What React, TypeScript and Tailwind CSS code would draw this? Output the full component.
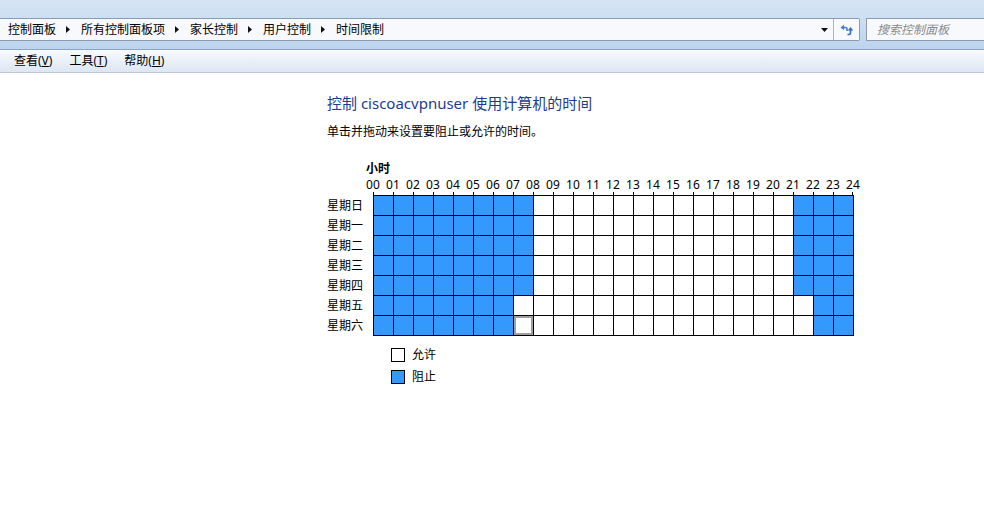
import React from 'react';

const days = ['星期日', '星期一', '星期二', '星期三', '星期四', '星期五', '星期六'];
const hours = Array.from({ length: 25 }, (_, i) => String(i).padStart(2, '0'));

// blocked hours for each day
function isBlocked(day: number, h: number) {
  if (day <= 4) return h < 8 || h >= 21;
  return h < 7 || h >= 22;
}

const crumbs = ['控制面板', '所有控制面板项', '家长控制', '用户控制', '时间限制'];

function Arrow() {
  return (
    <svg width="4" height="7" viewBox="0 0 4 7" className="ml-[10px] mr-[11px]">
      <path d="M0 0 L4 3.5 L0 7 Z" fill="#111" />
    </svg>
  );
}

function RefreshIcon() {
  return (
    <svg width="14" height="12" viewBox="0 0 14 12">
      {/* left arrow, pointing left, tail hooks down */}
      <path d="M0.5 3.5 L4 0.8 L4 6.2 Z" fill="#3c7fcf" />
      <path d="M3.5 3.5 L5.5 3.5 Q7 3.5 7 5 L7 7" stroke="#3c7fcf" strokeWidth="1.6" fill="none" />
      {/* right arrow, pointing up */}
      <path d="M10.5 3 L13.2 6.5 L7.8 6.5 Z" fill="#2f6cbf" />
      <path d="M10.5 6 L10.5 9 Q10.5 10.5 9 10.5 L7.5 10.5" stroke="#2f6cbf" strokeWidth="1.6" fill="none" />
    </svg>
  );
}

export default function App() {
  return (
    <div
      className="w-[984px] h-[517px] bg-white overflow-hidden flex flex-col text-[12px] text-black"
      style={{ fontFamily: '"Noto Sans", "Noto Sans CJK SC", sans-serif' }}
    >
      {/* glass header */}
      <div className="bg-gradient-to-b from-[#d6e5f5] to-[#bcd4ee] flex flex-col">
        <div className="h-[18px]" />
        <div className="flex items-stretch h-[23px]">
          <div className="flex-1 flex items-center bg-[#f7f9fc] border border-[#8d9bae] border-l-0 rounded-r-[2px]">
            <div className="flex items-center pl-[8px] flex-1">
              {crumbs.map((c, i) => (
                <React.Fragment key={c}>
                  <span className="leading-none">{c}</span>
                  {i < crumbs.length - 1 && <Arrow />}
                </React.Fragment>
              ))}
            </div>
            <div className="w-[14px] flex items-center justify-center mr-[2px]">
              <svg width="7" height="4" viewBox="0 0 7 4">
                <path d="M0 0 L7 0 L3.5 4 Z" fill="#111" />
              </svg>
            </div>
            <div className="w-[26px] h-full border-l border-[#a8b6c8] flex items-center justify-center">
              <RefreshIcon />
            </div>
          </div>
          <div className="w-[6px]" />
          <div className="w-[118px] bg-[#f7f9fc] border border-[#8d9bae] border-r-0 flex items-center pl-[10px] text-[#8a8a8a] italic">
            搜索控制面板
          </div>
        </div>
        <div className="h-[8px]" />
      </div>
      {/* menu bar */}
      <div className="h-[24px] border-t border-[#8fa3bb] border-b border-b-[#b9c7d9] bg-gradient-to-b from-[#f8fafd] to-[#dde6f3] flex items-center pl-[14px] gap-[17px]">
        <span>
          查看(<span className="underline">V</span>)
        </span>
        <span>
          工具(<span className="underline">T</span>)
        </span>
        <span>
          帮助(<span className="underline">H</span>)
        </span>
      </div>

      {/* content */}
      <div className="pl-[327px] pt-[20px] flex flex-col">
        <h1 className="text-[15px] leading-[20px] text-[#1e3c8f]">控制 ciscoacvpnuser 使用计算机的时间</h1>
        <p className="mt-[11px] leading-[16px]">单击并拖动来设置要阻止或允许的时间。</p>

        <div className="mt-[21px] flex flex-col">
          <div className="pl-[39px] font-bold leading-[15px]">小时</div>
          <div className="flex pl-[36px] leading-[15px] mt-[1px]">
            {hours.map((h) => (
              <span key={h} className="w-[20px] text-center tracking-[0.2px]">
                {h}
              </span>
            ))}
          </div>
          <div className="flex pl-[46px] h-[3px]">
            {Array.from({ length: 24 }, (_, i) => (
              <div key={i} className={`w-[20px] border-l border-black ${i === 23 ? 'border-r' : ''}`} />
            ))}
          </div>
          <div className="flex">
            <div className="w-[46px] flex flex-col pt-[1px]">
              {days.map((d) => (
                <div key={d} className="h-[20px] flex items-center">
                  {d}
                </div>
              ))}
            </div>
            <div className="border-l border-t border-black flex flex-col">
              {days.map((d, di) => (
                <div key={d} className="flex">
                  {Array.from({ length: 24 }, (_, h) => {
                    const blocked = isBlocked(di, h);
                    const focus = di === 6 && h === 7;
                    return (
                      <div key={h} className="w-[20px] h-[20px] border-r border-b border-black">
                        <div
                          className={`w-full h-full ${blocked ? 'bg-[#3399ff]' : 'bg-white'} ${
                            focus ? 'border-2 border-[#a0a0a0]' : ''
                          }`}
                        />
                      </div>
                    );
                  })}
                </div>
              ))}
            </div>
          </div>

          <div className="pl-[64px] mt-[12px] flex flex-col gap-[8px]">
            <div className="flex items-center gap-[7px] h-[14px]">
              <div className="w-[14px] h-[14px] border border-black bg-white" />
              <span className="leading-[14px]">允许</span>
            </div>
            <div className="flex items-center gap-[7px] h-[14px]">
              <div className="w-[14px] h-[14px] border border-black bg-[#3399ff]" />
              <span className="leading-[14px]">阻止</span>
            </div>
          </div>
        </div>
      </div>
    </div>
  );
}
